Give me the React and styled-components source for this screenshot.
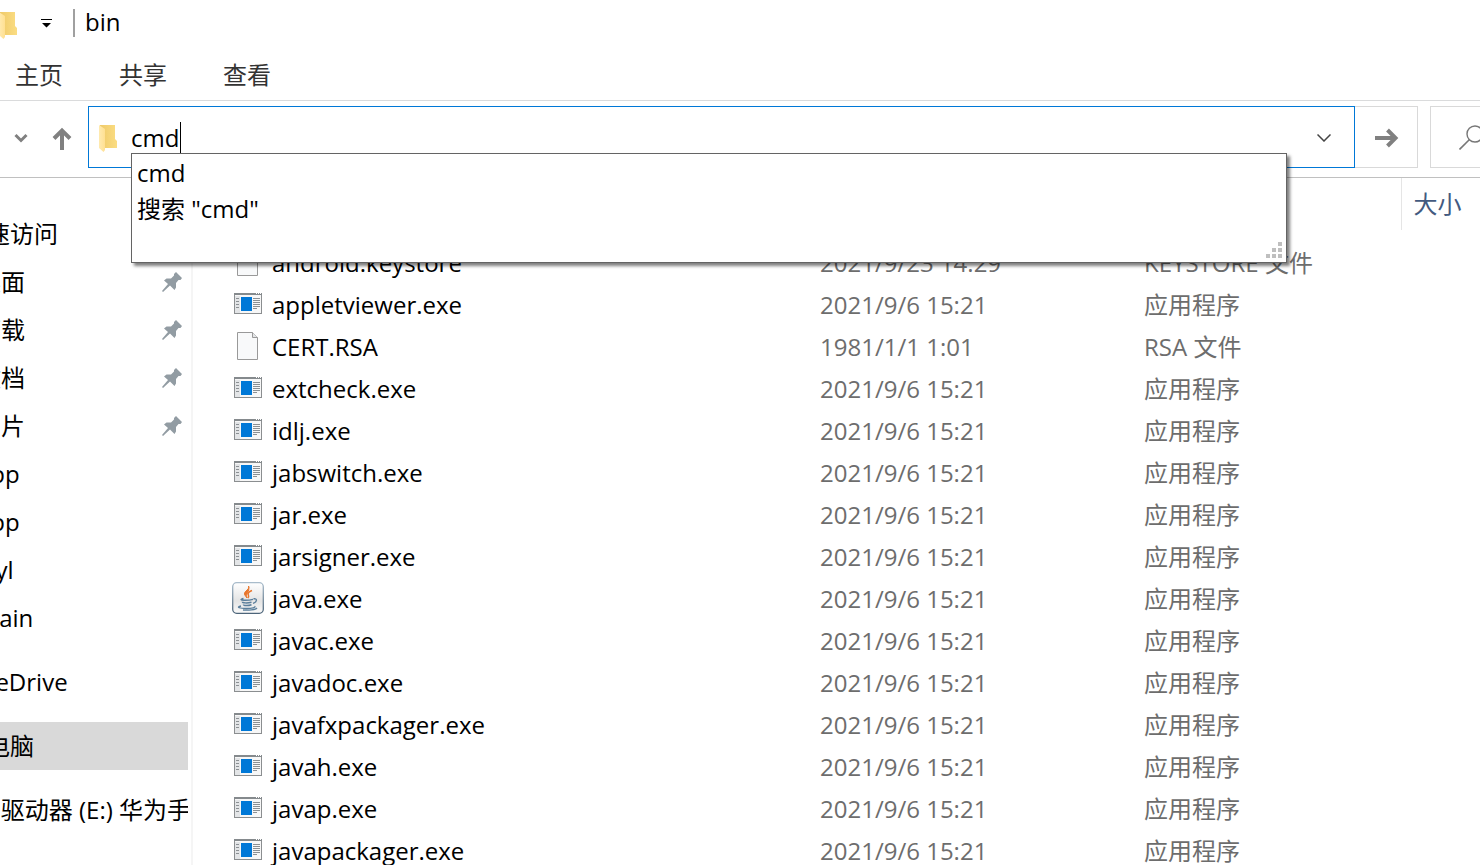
import React from 'react';
import styled, { createGlobalStyle } from 'styled-components';

const GlobalStyle = createGlobalStyle`
  body {
    margin: 0;
    background: #fff;
  }
  *, *::before, *::after {
    box-sizing: border-box;
  }
  body, button, input, table {
    font-family: "Open Sans", "Noto Sans CJK SC", sans-serif;
    font-size: 24px;
    line-height: 36px;
    color: #000;
  }
`;

const Window = styled.div`
  display: flex;
  flex-direction: column;
  height: 100vh;
  overflow: hidden;
`;

const PlainButton = styled.button`
  display: flex;
  align-items: center;
  justify-content: center;
  padding: 0;
  border: 0;
  background: none;
`;

const TitleBar = styled.header`
  display: flex;
  align-items: center;
  height: 44px;
`;

const TitleFolder = styled.div`
  display: flex;
  width: 32px;
  margin-left: -1px;
  padding-top: 6px;
`;

const QuickMenu = styled(PlainButton)`
  width: 30px;
  height: 44px;
  padding-top: 2px;
`;

const TitleDivider = styled.span`
  width: 2px;
  height: 28px;
  margin: 2px 10px 0 12px;
  background: #a0a0a0;
`;

const Title = styled.h1`
  margin: 0;
  font-size: 24px;
  font-weight: 400;
  line-height: 42px;
`;

const Tabs = styled.nav`
  display: flex;
  gap: 56px;
  padding: 13px 15px 7px;
  border-bottom: 1px solid #dadbdc;
`;

const Tab = styled.a`
  color: #333;
  text-decoration: none;
`;

const NavBar = styled.div`
  display: flex;
  align-items: stretch;
  height: 77px;
  padding: 5px 0 9px;
  border-bottom: 1px solid #c0c0c0;
`;

const HistoryButton = styled(PlainButton)`
  width: 42px;
  padding-top: 2px;
`;

const UpButton = styled(PlainButton)`
  width: 40px;
  margin-right: 6px;
  padding-top: 4px;
`;

const AddressBar = styled.div`
  position: relative;
  display: flex;
  flex: 1;
  align-items: center;
  padding: 2px 0 0 10px;
  border: 1px solid #0078d7;
`;

const AddressInput = styled.input`
  width: 49px;
  margin-left: 14px;
  padding: 0;
  border: 0;
  outline: 0;
  background: none;
`;

const Caret = styled.span`
  width: 1px;
  height: 32px;
  background: #000;
`;

const AddressToggle = styled(PlainButton)`
  width: 60px;
  margin-left: auto;
  height: 100%;
`;

const GoButton = styled(PlainButton)`
  width: 63px;
  padding: 2px 0 0 2px;
  border: 1px solid #d9d9d9;
  border-left: 0;
`;

const SearchButton = styled(PlainButton)`
  justify-content: flex-start;
  width: 50px;
  margin-left: 12px;
  padding-left: 28px;
  border: 1px solid #d9d9d9;
  border-right: 0;
  overflow: hidden;

  svg {
    flex-shrink: 0;
  }
`;

const Suggestions = styled.ul`
  position: absolute;
  top: 46px;
  left: 42px;
  right: 67px;
  z-index: 2;
  height: 110px;
  margin: 0;
  padding: 1px 5px;
  list-style: none;
  background: #fff;
  border: 1px solid #646464;
  box-shadow: 3px 3px 3px rgba(0, 0, 0, 0.5);
`;

const ResizeGrip = styled.svg`
  position: absolute;
  right: 4px;
  bottom: 4px;
`;

const Content = styled.div`
  display: flex;
  flex: 1;
  min-height: 0;
`;

const Tree = styled.ul`
  width: 193px;
  flex-shrink: 0;
  margin: 0;
  padding: 32px 3px 0 0;
  list-style: none;
  border-right: 2px solid #f5f5f5;
  overflow: hidden;
`;

const TreeItem = styled.li`
  display: flex;
  align-items: center;
  justify-content: space-between;
  height: 48px;
  margin-top: ${({ $spaced }) => ($spaced ? '16px' : 0)};
  padding-right: 6px;
  background: ${({ $selected }) => ($selected ? '#d9d9d9' : 'none')};
  white-space: nowrap;
  overflow: hidden;
`;

const TreeLabel = styled.span`
  margin-left: ${({ $nested }) => ($nested ? '-23px' : '-38px')};
`;

const Files = styled.table`
  flex: 1;
  width: 100%;
  table-layout: fixed;
  border-collapse: collapse;
  align-self: flex-start;

  thead::after {
    content: "";
    display: block;
    height: 12px;
  }
`;

const ColumnHeader = styled.th`
  width: ${({ $width }) => $width || 'auto'};
  height: 52px;
  padding: 0 0 0 12px;
  border-left: ${({ $first }) => ($first ? 0 : '1px solid #e5e5e5')};
  font-weight: 400;
  text-align: left;
  color: #435a80;
`;

const Cell = styled.td`
  height: 42px;
  padding: 0 0 0 12px;
  color: #6d6d6d;
  white-space: nowrap;
`;

const FileName = styled.div`
  display: flex;
  align-items: center;
  gap: 8px;
  padding-left: 27px;
  color: #000;
`;

const IconBox = styled.span`
  display: flex;
  align-items: center;
  justify-content: center;
  width: 32px;
  height: 34px;
  padding-bottom: 2px;
`;

const FolderIcon = () => (
  <svg width="18" height="27" viewBox="0 0 18 27" aria-hidden="true">
    <defs>
      <linearGradient id="folderBack" x1="0" x2="1">
        <stop offset="0" stopColor="#efca69" />
        <stop offset="1" stopColor="#fbdd83" />
      </linearGradient>
      <linearGradient id="folderFlap" x1="0" x2="1">
        <stop offset="0" stopColor="#ffeab0" />
        <stop offset="1" stopColor="#ffe092" />
      </linearGradient>
    </defs>
    <path d="M1 0H16V14L18 16V23H1Z" fill="url(#folderBack)" />
    <path d="M0 0L6 4V25L4.500 27L0 23Z" fill="url(#folderFlap)" />
  </svg>
);

const PinIcon = () => (
  <svg width="20" height="20" viewBox="0 0 20 20" aria-hidden="true">
    <path
      d="M14 0L20 6L18.500 8H16.500L14 11V15.500L12.500 18L8 13.500L1 20L0 19L6 12L2 8.500L4.500 6.500H9L12 3.500V2Z"
      fill="#929ca3"
    />
  </svg>
);

// The drawing sits at the top of its box, which leaves one pixel below it
const ExeIcon = () => (
  <svg width="28" height="22" viewBox="0 0 28 22" aria-hidden="true">
    <rect x="0.5" y="0.5" width="27" height="20" fill="#f7f7f7" stroke="#8b8e90" />
    <path d="M1 3H6V20H1Z" fill="#e3e5e7" />
    <path d="M0 0H28V2H0Z" fill="#858a8d" />
    <path d="M22 0.500H23M24 0.500H25M26 0.500H27" stroke="#fff" />
    <path d="M2 5.500H5M2 8.500H5M2 11.500H5M2 14.500H5" stroke="#8b9094" />
    <path d="M7 4H18V18H7Z" fill="#0078d7" />
    <path d="M19 5.500H26M19 7.500H26M19 9.500H26M19 11.500H26M19 13.500H26M19 15.500H23" stroke="#8b9094" />
  </svg>
);

const DocIcon = () => (
  <svg width="22" height="28" viewBox="0 0 22 28" aria-hidden="true">
    <path d="M0.500 0.500H15.500L20.500 5.500V27.500H0.500Z" fill="#f8f9fa" stroke="#999" />
    <path d="M15.500 0.500V5.500H20.500" fill="#e4e6e8" stroke="#999" />
  </svg>
);

const JavaIcon = () => (
  <svg width="32" height="32" viewBox="0 0 32 32" fill="none" aria-hidden="true">
    <defs>
      <linearGradient id="javaTile" x1="0" y1="0" x2="0" y2="1">
        <stop offset="0" stopColor="#fff" />
        <stop offset="0.6" stopColor="#e4e4e4" />
        <stop offset="1" stopColor="#fafafa" />
      </linearGradient>
      <linearGradient id="javaEdge" x1="0" y1="0" x2="0" y2="1">
        <stop offset="0" stopColor="#a9bccb" />
        <stop offset="1" stopColor="#4c6479" />
      </linearGradient>
    </defs>
    <rect x="0.7" y="0.7" width="30.600" height="30.600" rx="4" fill="url(#javaTile)" stroke="url(#javaEdge)" strokeWidth="1.300" />
    <path d="M16.500 4C18.500 7 12 9 12.500 12C12.700 13.600 14.300 14.600 15 16C12.500 12.500 18.500 9.500 16.500 4Z" fill="#e8762c" stroke="#e8762c" strokeWidth="1" />
    <path d="M20 8.500C17.500 9.500 15.700 11 16.200 12.500C16.600 13.700 17.300 14.500 15.800 16" stroke="#e8762c" strokeWidth="1.500" />
    <path d="M11.500 16.500C8 17.300 8.500 18.200 12 18.300C15 18.400 18 18.200 21 17.300M21.500 16.800C25.500 16 25.500 20 21 21.300" stroke="#5a7e9b" strokeWidth="1.400" />
    <path d="M10.500 19.800C10 21 15 21.300 19.500 20.300M11.500 22.500C11.500 23.800 16 24 19.500 22.800" stroke="#5a7e9b" strokeWidth="1.500" />
    <path d="M9 24C3.500 25.300 8 26.500 14 26.500C20 26.500 24.500 25.300 22.500 24.300M11 28C16 28.500 23.500 28 25 26" stroke="#5a7e9b" strokeWidth="1.300" />
  </svg>
);

const icons = { exe: ExeIcon, doc: DocIcon, java: JavaIcon };

const places = [
  { name: '快速访问' },
  { name: '桌面', nested: true, pinned: true },
  { name: '下载', nested: true, pinned: true },
  { name: '文档', nested: true, pinned: true },
  { name: '图片', nested: true, pinned: true },
  { name: 'app', nested: true },
  { name: 'app', nested: true },
  { name: 'wyl', nested: true },
  { name: 'main', nested: true },
  { name: 'OneDrive', spaced: true },
  { name: '此电脑', spaced: true, selected: true },
  { name: 'CD 驱动器 (E:) 华为手机', spaced: true },
];

const program = (name, icon = 'exe') => ({
  name, icon, date: '2021/9/6 15:21', type: '应用程序',
});

const files = [
  { name: 'android.keystore', icon: 'doc', date: '2021/9/23 14:29', type: 'KEYSTORE 文件' },
  program('appletviewer.exe'),
  { name: 'CERT.RSA', icon: 'doc', date: '1981/1/1 1:01', type: 'RSA 文件' },
  program('extcheck.exe'),
  program('idlj.exe'),
  program('jabswitch.exe'),
  program('jar.exe'),
  program('jarsigner.exe'),
  program('java.exe', 'java'),
  program('javac.exe'),
  program('javadoc.exe'),
  program('javafxpackager.exe'),
  program('javah.exe'),
  program('javap.exe'),
  program('javapackager.exe'),
];

const FileRow = ({ file }) => {
  const Icon = icons[file.icon];
  return (
    <tr>
      <Cell>
        <FileName>
          <IconBox><Icon /></IconBox>
          {file.name}
        </FileName>
      </Cell>
      <Cell>{file.date}</Cell>
      <Cell>{file.type}</Cell>
      <Cell />
    </tr>
  );
};

export default () => (
  <Window>
    <GlobalStyle />
    <TitleBar>
      <TitleFolder><FolderIcon /></TitleFolder>
      <QuickMenu aria-label="自定义快速访问工具栏">
        <svg width="11" height="9" viewBox="0 0 11 9" aria-hidden="true">
          <path d="M0 0H11V1H0ZM1 4H10L5.500 8.500Z" fill="#000" />
        </svg>
      </QuickMenu>
      <TitleDivider />
      <Title>bin</Title>
    </TitleBar>
    <Tabs>
      <Tab href="#home">主页</Tab>
      <Tab href="#share">共享</Tab>
      <Tab href="#view">查看</Tab>
    </Tabs>
    <NavBar>
      <HistoryButton aria-label="最近浏览的位置">
        <svg width="14" height="10" viewBox="0 0 14 10" fill="none" aria-hidden="true">
          <path d="M1.500 2L7 7.500L12.500 2" stroke="#808080" strokeWidth="3" />
        </svg>
      </HistoryButton>
      <UpButton aria-label="上移">
        <svg width="20" height="24" viewBox="0 0 20 24" fill="none" aria-hidden="true">
          <path d="M10 23V4M2 11.500L10 3.500L18 11.500" stroke="#808080" strokeWidth="4" />
        </svg>
      </UpButton>
      <AddressBar>
        <FolderIcon />
        <AddressInput aria-label="地址" defaultValue="cmd" />
        <Caret />
        <AddressToggle aria-label="以前的位置">
          <svg width="14" height="8" viewBox="0 0 14 8" fill="none" aria-hidden="true">
            <path d="M0.500 0.500L7 7L13.500 0.500" stroke="#444" strokeWidth="1.500" />
          </svg>
        </AddressToggle>
        <Suggestions>
          <li>cmd</li>
          <li>搜索 &quot;cmd&quot;</li>
          <ResizeGrip width="16" height="16" viewBox="0 0 16 16" aria-hidden="true">
            <path d="M12 0h4v4h-4zM6 6h4v4h-4zM12 6h4v4h-4zM0 12h4v4h-4zM6 12h4v4h-4zM12 12h4v4h-4z" fill="#bfbfbf" />
          </ResizeGrip>
        </Suggestions>
      </AddressBar>
      <GoButton aria-label="转到">
        <svg width="24" height="20" viewBox="0 0 24 20" fill="none" aria-hidden="true">
          <path d="M0 10H21M12.500 2L20.500 10L12.500 18" stroke="#808080" strokeWidth="4" />
        </svg>
      </GoButton>
      <SearchButton aria-label="搜索">
        <svg width="25" height="25" viewBox="0 0 25 25" fill="none" aria-hidden="true">
          <circle cx="16" cy="9" r="8" stroke="#777" strokeWidth="1.400" />
          <path d="M10.500 14.500L0.500 24.500" stroke="#777" strokeWidth="1.600" />
        </svg>
      </SearchButton>
    </NavBar>
    <Content>
      <Tree>
        {places.map((place, i) => (
          <TreeItem key={i} $spaced={place.spaced} $selected={place.selected}>
            <TreeLabel $nested={place.nested}>{place.name}</TreeLabel>
            {place.pinned && <PinIcon />}
          </TreeItem>
        ))}
      </Tree>
      <Files>
        <thead>
          <tr>
            <ColumnHeader $first aria-label="名称" />
            <ColumnHeader $width="324px" aria-label="修改日期" />
            <ColumnHeader $width="269px" aria-label="类型" />
            <ColumnHeader $width="79px">大小</ColumnHeader>
          </tr>
        </thead>
        <tbody>
          {files.map(file => <FileRow key={file.name} file={file} />)}
        </tbody>
      </Files>
    </Content>
  </Window>
);
